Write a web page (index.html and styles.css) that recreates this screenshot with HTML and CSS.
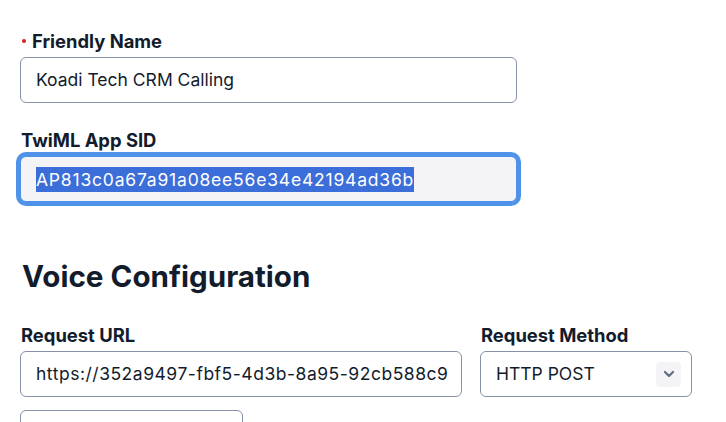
FILE: index.html
```html
<!DOCTYPE html>
<html>
<head>
<meta charset="utf-8">
<link rel="stylesheet" href="styles.css">
</head>
<body>
<form class="form">
  <div class="field">
    <label class="label"><span class="req"></span>Friendly Name</label>
    <div class="input">Koadi Tech CRM Calling</div>
  </div>
  <div class="field field-sid">
    <label class="label">TwiML App SID</label>
    <div class="input input-readonly"><span class="sel">AP813c0a67a91a08ee56e34e42194ad36b</span></div>
  </div>
  <h2 class="heading">Voice Configuration</h2>
  <div class="row">
    <div class="field field-url">
      <label class="label">Request URL</label>
      <div class="input input-clip"><span class="clip-text">https://352a9497-fbf5-4d3b-8a95-92cb588c9</span></div>
    </div>
    <div class="field field-method">
      <label class="label">Request Method</label>
      <div class="input select"><span>HTTP POST</span>
        <span class="chev"><svg width="12" height="8" viewBox="0 0 12 8"><path d="M2 2 L6 6 L10 2" fill="none" stroke="#606b85" stroke-width="2.2" stroke-linecap="round" stroke-linejoin="round"/></svg></span>
      </div>
    </div>
  </div>
  <div class="input input-small"></div>
</form>
</body>
</html>
```
FILE: styles.css
```css
html, body {
  margin: 0;
  padding: 0;
  background: #ffffff;
  overflow: hidden;
}
body {
  font-family: Inter, "Noto Sans", sans-serif;
  color: #121c2d;
  width: 726px;
  height: 422px;
}
.form {
  display: flex;
  flex-direction: column;
  padding: 30px 0 0 20px;
  height: 392px;
  overflow: hidden;
}
.field {
  display: flex;
  flex-direction: column;
  width: 497px;
}
.label {
  display: flex;
  align-items: center;
  font-size: 18.4px;
  font-weight: 700;
  line-height: 22px;
  height: 22px;
  margin-bottom: 5px;
  padding-left: 1px;
  color: #121c2d;
}
.req {
  width: 4px;
  height: 4px;
  border-radius: 50%;
  background: #d61f1f;
  margin: 0 6px 0 1px;
}
.input {
  box-sizing: border-box;
  height: 46px;
  border: 1px solid #8891aa;
  border-radius: 6px;
  background: #fff;
  font-size: 17.5px;
  line-height: 24px;
  padding: 10px 15px;
  white-space: nowrap;
  display: flex;
  align-items: center;
  flex: none;
}
.field-sid {
  margin-top: 26px;
}
.input-readonly {
  background: #f4f4f6;
  border-color: #4e92e9;
  box-shadow: 0 0 0 4px #4e92e9;
}
.sel {
  background: #3b6ed8;
  color: #fff;
  line-height: 25px;
  letter-spacing: 0.8px;
}
.heading {
  margin: 55px 0 0 2px;
  font-size: 29.6px;
  font-weight: 700;
  line-height: 38px;
  color: #121c2d;
}
.row {
  display: flex;
  gap: 18px;
  margin-top: 29px;
}
.field-url {
  width: 442px;
}
.input-clip {
  overflow: hidden;
}
.clip-text {
  letter-spacing: 0.52px;
}
.field-method {
  width: 212px;
}
.select {
  justify-content: space-between;
  padding-right: 10px;
}
.chev {
  width: 25px;
  height: 25px;
  border-radius: 4px;
  background: #f4f4f6;
  display: flex;
  align-items: center;
  justify-content: center;
}
.input-small {
  width: 223px;
  margin-top: 13px;
}
```
